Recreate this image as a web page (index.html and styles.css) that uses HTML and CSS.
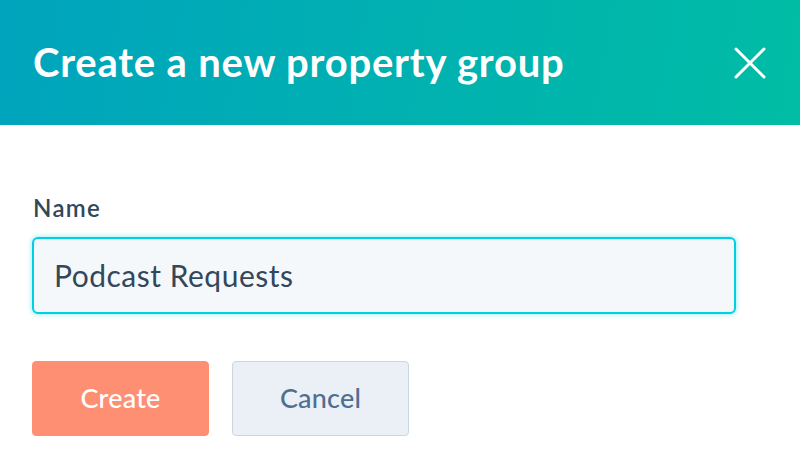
FILE: index.html
```html
<!DOCTYPE html>
<html>
<head>
<meta charset="utf-8">
<link rel="stylesheet" href="styles.css">
</head>
<body>
<div class="dialog">
  <header class="dialog-header">
    <h1 class="dialog-title">Create a new property group</h1>
    <button class="close-btn" aria-label="Close">
      <svg width="32" height="32" viewBox="0 0 32 32"><path d="M2 2 L30 30 M30 2 L2 30" stroke="#fff" stroke-width="3" stroke-linecap="round" fill="none"/></svg>
    </button>
  </header>
  <main class="dialog-body">
    <label class="field-label">Name</label>
    <div class="text-input">Podcast Requests</div>
    <div class="actions">
      <button class="btn btn-primary">Create</button>
      <button class="btn btn-secondary">Cancel</button>
    </div>
  </main>
</div>
</body>
</html>
```

FILE: styles.css
```css
* { box-sizing: border-box; }
html, body { margin: 0; padding: 0; background: #fff; }
body { font-family: Lato, "Noto Sans", sans-serif; width: 800px; height: 457px; overflow: hidden; }
.dialog-header {
  height: 125px;
  background: linear-gradient(100deg, #00a4bd 0%, #00bda5 100%);
  display: flex;
  align-items: center;
  justify-content: space-between;
  padding: 0 33px 0 33px;
}
.dialog-title {
  margin: 0;
  color: #fff;
  font-size: 40px;
  font-weight: 700;
  letter-spacing: 0.8px;
  line-height: 46px;
  padding-bottom: 2px;
}
.close-btn {
  background: none;
  border: 0;
  padding: 0;
  width: 32px;
  height: 32px;
  display: flex;
  margin-right: 1px;
}
.dialog-body {
  padding: 70px 32px 0 32px;
  display: flex;
  flex-direction: column;
  align-items: flex-start;
}
.field-label {
  color: #33475b;
  font-size: 24px;
  font-weight: 600;
  letter-spacing: 1.3px;
  line-height: 26px;
  margin-left: 1px;
}
.text-input {
  margin-top: 16px;
  width: 704px;
  height: 77px;
  border: 2px solid #00d0e4;
  border-radius: 6px;
  background: #f5f8fa;
  box-shadow: 0 0 4px 1px rgba(0, 208, 228, 0.35);
  color: #33475b;
  font-size: 30px;
  letter-spacing: 0.5px;
  display: flex;
  align-items: center;
  padding: 0 0 2px 20px;
}
.actions {
  margin-top: 47px;
  display: flex;
  gap: 23px;
}
.btn {
  width: 177px;
  height: 75px;
  border-radius: 4px;
  font-family: inherit;
  font-size: 27px;
  font-weight: 500;
  letter-spacing: 0.2px;
  display: flex;
  align-items: center;
  justify-content: center;
  padding: 0 0 2px 0;
}
.btn-primary {
  background: #ff8f73;
  border: 1px solid #ff8f73;
  color: #fff;
}
.btn-secondary {
  background: #eaf0f6;
  border: 1px solid #cbd6e2;
  color: #506e91;
}
```
